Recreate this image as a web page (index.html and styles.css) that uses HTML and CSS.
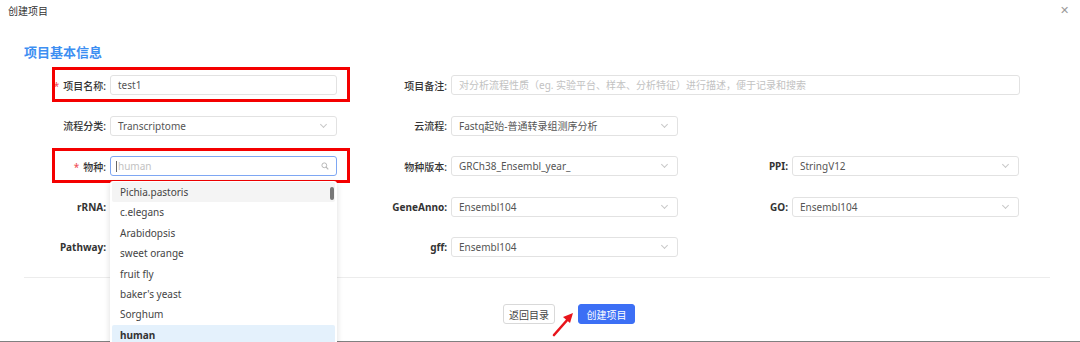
FILE: index.html
```html
<!DOCTYPE html>
<html>
<head>
<meta charset="UTF-8">
<title>创建项目</title>
<link rel="stylesheet" href="styles.css">
</head>
<body>
<div class="dialog">
	<div class="dialogHead">
		<span class="dialogTitle">创建项目</span>
		<span class="close">&#x2715;</span>
	</div>

	<h2 class="groupTitle">项目基本信息</h2>

	<div class="formGrid">
		<div class="field">
			<label class="req">项目名称:</label>
			<div class="input">test1</div>
			<div class="mark"></div>
		</div>
		<div class="field wide">
			<label>项目备注:</label>
			<div class="input hint">对分析流程性质（eg. 实验平台、样本、分析特征）进行描述，便于记录和搜索</div>
		</div>

		<div class="field">
			<label>流程分类:</label>
			<div class="input select">Transcriptome<span class="arrow"></span></div>
		</div>
		<div class="field">
			<label>云流程:</label>
			<div class="input select">Fastq起始-普通转录组测序分析<span class="arrow"></span></div>
		</div>
		<div class="field"></div>

		<div class="field">
			<label class="req">物种:</label>
			<div class="input focus hint"><span class="caret"></span>human
				<svg class="search" width="8" height="8" viewBox="0 0 8 8"><circle cx="3.3" cy="3.3" r="2.4" fill="none" stroke="#b8b8b8" stroke-width="1"/><path d="M5 5 L7.3 7.3" stroke="#b8b8b8" stroke-width="1.1"/></svg>
			</div>
			<div class="mark"></div>
			<ul class="options">
				<li class="hover">Pichia.pastoris</li>
				<li>c.elegans</li>
				<li>Arabidopsis</li>
				<li>sweet orange</li>
				<li>fruit fly</li>
				<li>baker's yeast</li>
				<li>Sorghum</li>
				<li class="picked">human</li>
				<span class="scroll"></span>
			</ul>
		</div>
		<div class="field">
			<label>物种版本:</label>
			<div class="input select">GRCh38_Ensembl_year_<span class="arrow"></span></div>
		</div>
		<div class="field">
			<label class="bold">PPI:</label>
			<div class="input select">StringV12<span class="arrow"></span></div>
		</div>

		<div class="field">
			<label class="bold">rRNA:</label>
		</div>
		<div class="field">
			<label class="bold">GeneAnno:</label>
			<div class="input select">Ensembl104<span class="arrow"></span></div>
		</div>
		<div class="field">
			<label class="bold">GO:</label>
			<div class="input select">Ensembl104<span class="arrow"></span></div>
		</div>

		<div class="field">
			<label class="bold">Pathway:</label>
		</div>
		<div class="field">
			<label class="bold">gff:</label>
			<div class="input select">Ensembl104<span class="arrow"></span></div>
		</div>
	</div>

	<div class="line"></div>

	<div class="footer">
		<button class="btnBack">返回目录</button>
		<button class="btnCreate">创建项目</button>
		<svg class="pointer" width="24" height="26" viewBox="0 0 24 26">
			<path d="M2 24 L17 7" stroke="#e8141b" stroke-width="2.6" stroke-linecap="round"/>
			<path d="M21 2 L11 6 L18 12 Z" fill="#e8141b"/>
		</svg>
	</div>
</div>
<div class="edge"></div>
</body>
</html>
```

FILE: styles.css
```css
* {
	margin: 0;
	padding: 0;
	box-sizing: border-box;
}

html, body {
	height: 342px;
	overflow: hidden;
}

body {
	background: #fff;
	font-family: "Noto Sans", "Noto Sans CJK SC", sans-serif;
	font-size: 10px;
	color: #333;
	position: relative;
}

.dialogHead {
	height: 20px;
	padding: 3px 8px 0;
	display: flex;
	justify-content: space-between;
}

.dialogTitle {
	font-size: 10px;
	color: #333;
}

.close {
	color: #9a9a9a;
	font-size: 11px;
	line-height: 11px;
	margin-right: 3px;
	margin-top: 1px;
}

.groupTitle {
	font-size: 13px;
	font-weight: bold;
	color: #3d8ff2;
	padding-left: 24px;
	margin-top: 22px;
	height: 20px;
	line-height: 20px;
}

.formGrid {
	display: grid;
	grid-template-columns: repeat(3, 341px);
	grid-auto-rows: 20px;
	row-gap: 20.5px;
	padding-left: 24px;
	margin-top: 13px;
}

.field {
	position: relative;
	display: flex;
	align-items: center;
}

.field.wide {
	grid-column: span 2;
}

.field label {
	width: 83px;
	text-align: right;
	padding-right: 1px;
	color: #333;
	font-weight: 500;
	flex-shrink: 0;
	margin-right: 3px;
}

.field label.bold {
	font-weight: 700;
}

.field label.req::before {
	content: "*";
	color: #f0525a;
	margin-right: 4px;
}

.input {
	position: relative;
	width: 227px;
	height: 20px;
	border: 1px solid #e2e2e2;
	border-radius: 3px;
	padding: 0 7px;
	line-height: 18px;
	color: #555;
	white-space: nowrap;
	overflow: hidden;
}

.wide .input {
	width: 569px;
}

.input.hint {
	color: #c2c2c2;
}

.input.focus {
	border-color: #7ea7f3;
	padding-left: 5px;
}

.caret {
	display: inline-block;
	width: 1px;
	height: 11px;
	background: #666;
	vertical-align: -2px;
	margin-right: 1px;
}

.arrow {
	position: absolute;
	right: 10px;
	top: 5px;
	width: 5px;
	height: 5px;
	border-right: 1px solid #c8c8c8;
	border-bottom: 1px solid #c8c8c8;
	transform: rotate(45deg);
}

.search {
	position: absolute;
	right: 7px;
	top: 5px;
}

.mark {
	position: absolute;
	left: 28px;
	top: -8px;
	width: 298px;
	height: 35px;
	border: 3px solid #f40000;
	pointer-events: none;
}

.options {
	position: absolute;
	left: 86px;
	top: 25px;
	width: 227px;
	height: 170px;
	background: #fff;
	list-style: none;
	box-shadow: 0 2px 6px rgba(0, 0, 0, 0.14);
	border-radius: 3px;
	padding: 1px 2px;
	z-index: 5;
}

.options li {
	height: 20.4px;
	line-height: 20.4px;
	padding-left: 8px;
	color: #444;
	border-radius: 2px;
}

.options li.hover {
	background: #f4f4f4;
}

.options li.picked {
	background: #e4f1fc;
	font-weight: 700;
	color: #333;
}

.scroll {
	position: absolute;
	right: 3px;
	top: 6px;
	width: 4px;
	height: 13px;
	border-radius: 2px;
	background: #777;
}

.line {
	margin: 20px 30px 0 24px;
	border-top: 1px solid #ececec;
}

.footer {
	position: relative;
	display: flex;
	gap: 23px;
	padding-left: 503px;
	margin-top: 26px;
}

.footer button {
	height: 20px;
	border-radius: 3px;
	font-family: "Noto Sans CJK SC", sans-serif;
	font-size: 10px;
	padding: 0;
	white-space: nowrap;
}

.btnBack {
	width: 52px;
	background: #fff;
	border: 1px solid #d9d9d9;
	color: #444;
}

.btnCreate {
	width: 57px;
	background: #3c6ff5;
	border: 1px solid #3c6ff5;
	color: #fff;
}

.pointer {
	position: absolute;
	left: 552px;
	top: 7px;
}

.edge {
	position: absolute;
	left: 0;
	right: 0;
	bottom: 0;
	height: 1px;
	background: #808080;
}
```
